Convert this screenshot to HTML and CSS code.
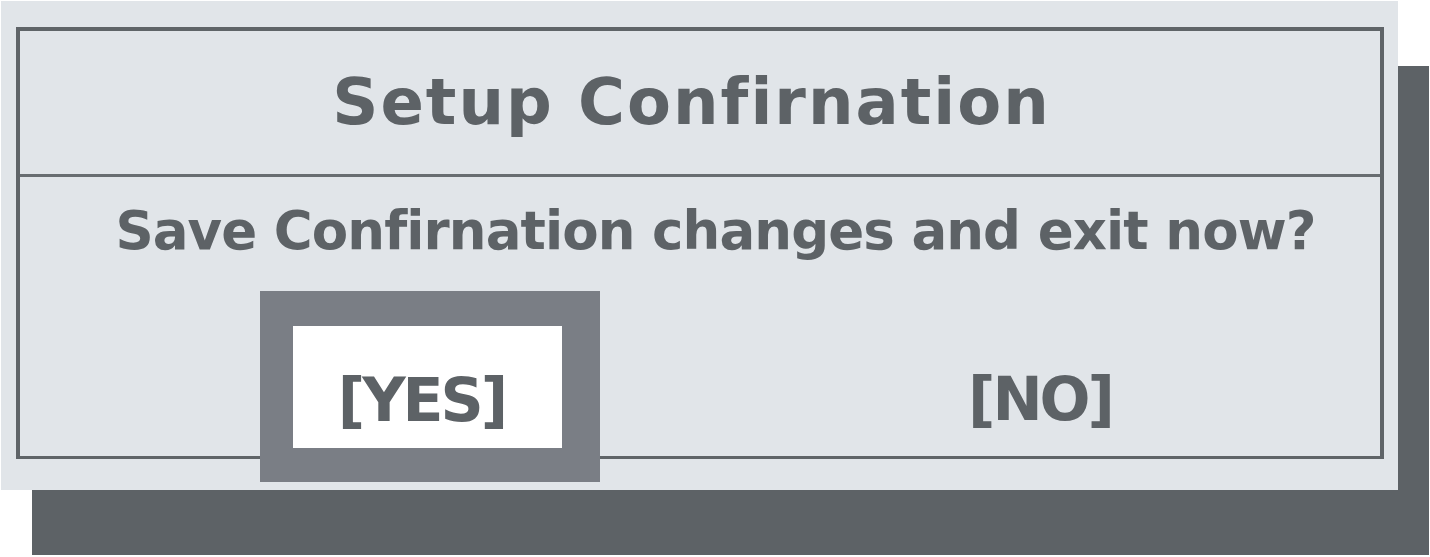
FILE: index.html
```html
<!DOCTYPE html>
<html lang="en">
<head>
<meta charset="utf-8">
<title>Setup Confirnation</title>
<link rel="stylesheet" href="styles.css">
</head>
<body>
<div class="dialog">
  <div class="frame">
    <div class="title">Setup Confirnation</div>
    <div class="body">
      <div class="question">Save Confirnation changes and exit now?</div>
      <div class="buttons">
        <div class="btn-yes"><div class="btn-yes-inner">[YES]</div></div>
        <div class="btn-no">[NO]</div>
      </div>
    </div>
  </div>
</div>
</body>
</html>
```
FILE: styles.css
```css
html, body {
  margin: 0;
  padding: 0;
  background: #ffffff;
}
body {
  width: 1430px;
  height: 557px;
  overflow: hidden;
  font-family: "DejaVu Sans", "Liberation Sans", sans-serif;
  font-weight: bold;
  color: #5d6266;
}
.dialog {
  margin: 1px 0 0 1px;
  width: 1397px;
  height: 489px;
  box-sizing: border-box;
  padding: 26px 14px 31px 15px;
  background: #e1e5e9;
  box-shadow: 31px 65px 0 #5d6266;
}
.frame {
  height: 432px;
  box-sizing: border-box;
  border: 4px solid #5f6468;
  border-bottom-width: 3px;
  display: flex;
  flex-direction: column;
}
.title {
  height: 146px;
  flex: none;
  box-sizing: border-box;
  border-bottom: 3px solid #686d71;
  font-size: 64px;
  line-height: 143px;
  text-align: center;
  padding-right: 17px;
  letter-spacing: 2px;
  white-space: nowrap;
}
.body {
  flex: 1;
  display: flex;
  flex-direction: column;
}
.question {
  font-size: 53px;
  line-height: 108px;
  letter-spacing: -0.9px;
  padding: 0 0 6px 31px;
  text-align: center;
  white-space: nowrap;
}
.buttons {
  display: flex;
  align-items: flex-start;
  height: 165px;
  margin-left: -1px;
}
.btn-yes {
  margin-left: 241px;
  width: 340px;
  height: 191px;
  box-sizing: border-box;
  padding: 35px 38px 34px 33px;
  background: #7a7e85;
  flex: none;
}
.btn-yes-inner {
  height: 122px;
  box-sizing: border-box;
  background: #ffffff;
  font-size: 60px;
  letter-spacing: -3px;
  line-height: 70px;
  padding: 39px 12px 0 0;
  text-align: center;
  white-space: nowrap;
}
.btn-no {
  margin-left: 300px;
  width: 280px;
  flex: none;
  font-size: 60px;
  letter-spacing: -3px;
  line-height: 70px;
  padding-top: 73px;
  text-align: center;
  white-space: nowrap;
}
```
